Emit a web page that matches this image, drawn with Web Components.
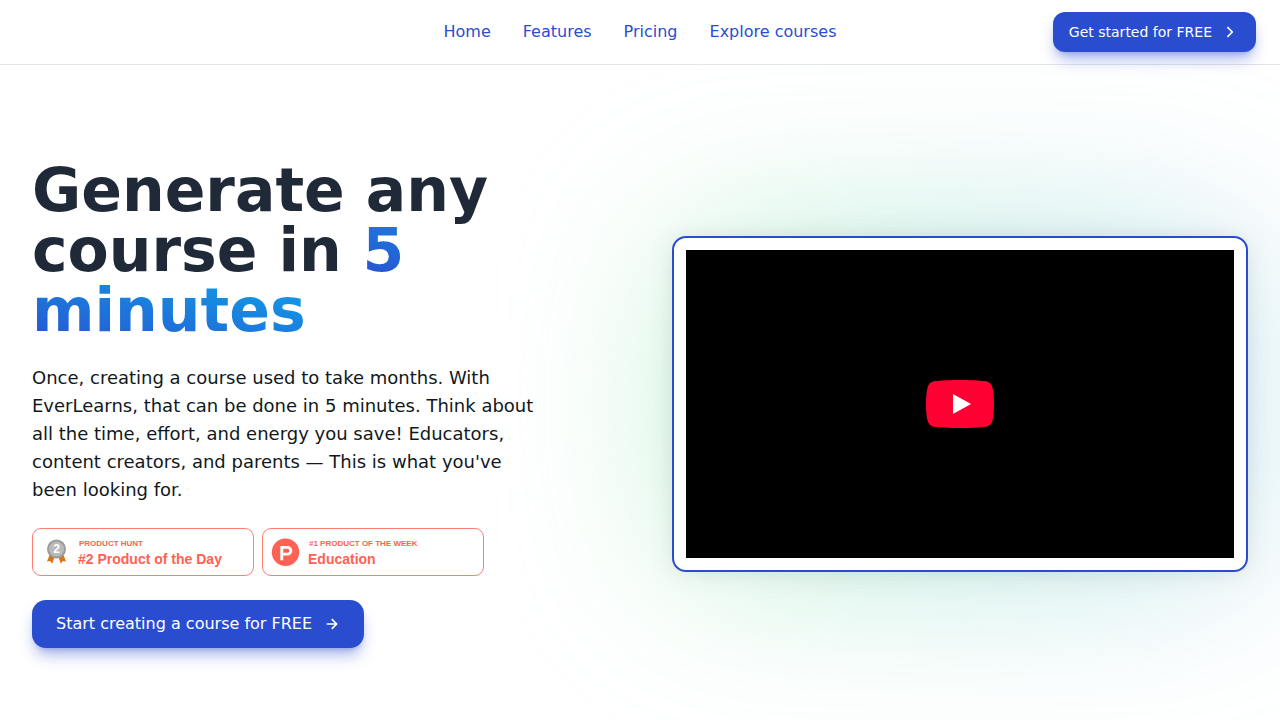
<!DOCTYPE html>
<html lang="en">
<head>
<meta charset="utf-8">
<meta name="viewport" content="width=device-width, initial-scale=1">
<title>EverLearns</title>
<style>
  body {
    margin: 0;
    background: #fff;
    color: #11181c;
    font-family: "DejaVu Sans", sans-serif;
    font-size: 16px;
    line-height: 24px;
    --primary: #2a4dd0;
    --ink: #1f2937;
    --coral: #ff6154;
  }
</style>
</head>
<body>
<landing-page></landing-page>
<script>
  const define = (name, html) => {
    const template = document.createElement('template');
    template.innerHTML = html;
    customElements.define(name, class extends HTMLElement {
      constructor() {
        super();
        this.attachShadow({ mode: 'open' }).append(template.content.cloneNode(true));
      }
    });
  };

  define('cta-button', `
    <style>
      :host { display: inline-block; }
      button {
        display: flex; align-items: center; gap: 8px;
        height: 40px; padding: 0 16px;
        border: 0; border-radius: 12px;
        background: var(--primary); color: #fff;
        font: inherit; font-size: 14px; line-height: 20px; white-space: nowrap;
        box-shadow: 0 10px 15px -3px rgba(42, 77, 208, .4), 0 4px 6px -4px rgba(42, 77, 208, .4);
        cursor: pointer;
      }
      :host([size="lg"]) button {
        gap: 12px; height: 48px; padding: 0 24px;
        border-radius: 14px; font-size: 16px; line-height: 24px;
      }
    </style>
    <button type="button"><slot></slot><slot name="icon"></slot></button>
  `);

  define('line-icon', `
    <style>
      :host { display: block; width: 20px; height: 20px; }
      :host([size="sm"]) { width: 16px; height: 16px; }
      svg { display: none; width: 100%; height: 100%; fill: none; stroke: currentColor;
        stroke-width: 1.7; stroke-linecap: butt; stroke-linejoin: miter; }
      :host([name="chevron"]) .chevron, :host([name="arrow"]) .arrow { display: block; }
    </style>
    <svg class="chevron" viewBox="0 0 20 20" aria-hidden="true"><path d="M7.400 5.200 12.200 10l-4.800 4.800"/></svg>
    <svg class="arrow" viewBox="0 0 16 16" aria-hidden="true"><path d="M2.700 8h9.800M7.800 3.200 12.600 8l-4.800 4.800"/></svg>
  `);

  define('site-header', `
    <style>
      :host { display: block; position: relative; z-index: 1; background: #fff; box-shadow: 0 1px 0 #e4e4e9; }
      header {
        display: grid; grid-template-columns: 1fr auto 1fr; align-items: center;
        height: 64px; padding: 0 24px;
      }
      nav { grid-column: 2; display: flex; gap: 32px; }
      a { color: var(--primary); text-decoration: none; }
      cta-button { justify-self: end; }
    </style>
    <header>
      <nav aria-label="Main">
        <a href="#home">Home</a>
        <a href="#features">Features</a>
        <a href="#pricing">Pricing</a>
        <a href="#courses">Explore courses</a>
      </nav>
      <cta-button>Get started for FREE<line-icon slot="icon" name="chevron"></line-icon></cta-button>
    </header>
  `);

  define('award-badge', `
    <style>
      :host { display: block; width: 222px; }
      a {
        display: flex; align-items: center; gap: 8px; box-sizing: border-box;
        height: 48px; padding: 0 8px;
        border: 1px solid #ff7c71; border-radius: 9px;
        background: #fff; color: var(--coral); text-decoration: none;
        font-family: "Liberation Sans", Arial, sans-serif; font-weight: 700;
      }
      .text { display: grid; padding-top: 2px; white-space: nowrap; }
      .label { padding-left: 1px; font-size: 8px; line-height: 12px; }
      .title { font-size: 14px; line-height: 18px; }
    </style>
    <a href="#product-hunt">
      <slot name="icon"></slot>
      <span class="text"><span class="label"><slot name="label"></slot></span><span class="title"><slot></slot></span></span>
    </a>
  `);

  define('medal-icon', `
    <style>
      :host { display: block; width: 29px; height: 28px; }
      svg { display: block; width: 100%; height: 100%; }
      text { font: 700 12px "Liberation Sans", Arial, sans-serif; fill: #fff; text-anchor: middle; }
    </style>
    <svg viewBox="0 0 29 28" role="img" aria-label="Second place medal">
      <path d="M8.500 17 6 23.500l3.200-.6 1.900 2.800 3-8zM22.500 17l2.500 6.500-3.200-.6-1.900 2.800-3-8z" fill="#dc7414"/>
      <circle cx="15.500" cy="11" r="9.500" fill="#9b9b9b"/>
      <circle cx="15.500" cy="11" r="7.500" fill="#bababa"/>
      <text x="15.500" y="15">2</text>
    </svg>
  `);

  define('ph-icon', `
    <style>
      :host { display: block; width: 29px; height: 28px; }
      svg { display: block; width: 100%; height: 100%; }
    </style>
    <svg viewBox="0 0 29 28" role="img" aria-label="Product Hunt">
      <circle cx="14.500" cy="14.300" r="13.700" fill="#ff6154"/>
      <path fill="#fff" fill-rule="evenodd" d="M9.300 8h7.200a4.800 4.800 0 0 1 0 9.600h-4.300V22.300H9.300zM12.200 10.800v4h4.100a2 2 0 0 0 0-4z"/>
    </svg>
  `);

  define('hero-copy', `
    <style>
      :host { display: flex; flex-direction: column; align-items: flex-start; gap: 24px; max-width: 512px; }
      h1, p { margin: 0; }
      h1 { color: var(--ink); font-size: 60px; line-height: 60px; font-weight: 700; }
      h1 span {
        background: linear-gradient(to top right, #2a4dd0, #0ea5e9);
        -webkit-background-clip: text; background-clip: text; color: transparent;
      }
      p { font-size: 18px; line-height: 28px; }
      .badges { display: flex; flex-wrap: wrap; gap: 8px; }
    </style>
    <h1>Generate any course in <span>5 minutes</span></h1>
    <p>Once, creating a course used to take months. With EverLearns, that can be done in 5 minutes. Think about all the time, effort, and energy you save! Educators, content creators, and parents — This is what you've been looking for.</p>
    <div class="badges">
      <award-badge><medal-icon slot="icon"></medal-icon><span slot="label">PRODUCT HUNT</span>#2 Product of the Day</award-badge>
      <award-badge><ph-icon slot="icon"></ph-icon><span slot="label">#1 PRODUCT OF THE WEEK</span>Education</award-badge>
    </div>
    <cta-button size="lg">Start creating a course for FREE<line-icon slot="icon" name="arrow" size="sm"></line-icon></cta-button>
  `);

  define('video-card', `
    <style>
      :host { display: block; position: relative; }
      .glow {
        position: absolute; inset: 0; filter: blur(88px); opacity: .4;
        background: linear-gradient(to right, #86e8a4, #4fc9a8 45%, #66c2cc 75%, #84c6e6);
      }
      .frame {
        position: relative; padding: 12px;
        border: 2px solid var(--primary); border-radius: 14px; background: #fff;
        box-shadow: 0 0 15px rgba(0, 0, 0, .03), 0 2px 30px rgba(0, 0, 0, .08);
      }
      .player { display: grid; place-items: center; aspect-ratio: 16 / 9; background: #000; }
      button { display: block; padding: 0; border: 0; background: none; cursor: pointer; }
      svg { display: block; width: 68px; height: 48px; }
    </style>
    <div class="glow"></div>
    <div class="frame">
      <div class="player">
        <button type="button" aria-label="Play">
          <svg viewBox="0 0 68 48" aria-hidden="true">
            <path fill="#f03" d="M66.520 7.740c-.780-2.930-2.490-5.410-5.420-6.190C55.790.13 34 0 34 0S12.210.13 6.900 1.550C3.970 2.330 2.270 4.810 1.480 7.740.06 13.050 0 24 0 24s.06 10.950 1.480 16.260c.780 2.930 2.490 5.410 5.420 6.190C12.210 47.870 34 48 34 48s21.790-.13 27.100-1.550c2.930-.780 4.640-3.260 5.420-6.190C67.940 34.950 68 24 68 24s-.06-10.950-1.480-16.260z"/>
            <path fill="#fff" d="M45 24 27 14v20z"/>
          </svg>
        </button>
      </div>
    </div>
  `);

  define('landing-page', `
    <style>
      :host { display: block; }
      main {
        display: grid; grid-template-columns: repeat(2, minmax(0, 1fr)); align-items: center; gap: 64px;
        padding: 96px 32px; overflow: hidden;
      }
      hero-copy { position: relative; z-index: 1; }
      @media (max-width: 900px) { main { grid-template-columns: minmax(0, 1fr); } }
    </style>
    <site-header></site-header>
    <main>
      <hero-copy></hero-copy>
      <video-card></video-card>
    </main>
  `);
</script>
</body>
</html>
